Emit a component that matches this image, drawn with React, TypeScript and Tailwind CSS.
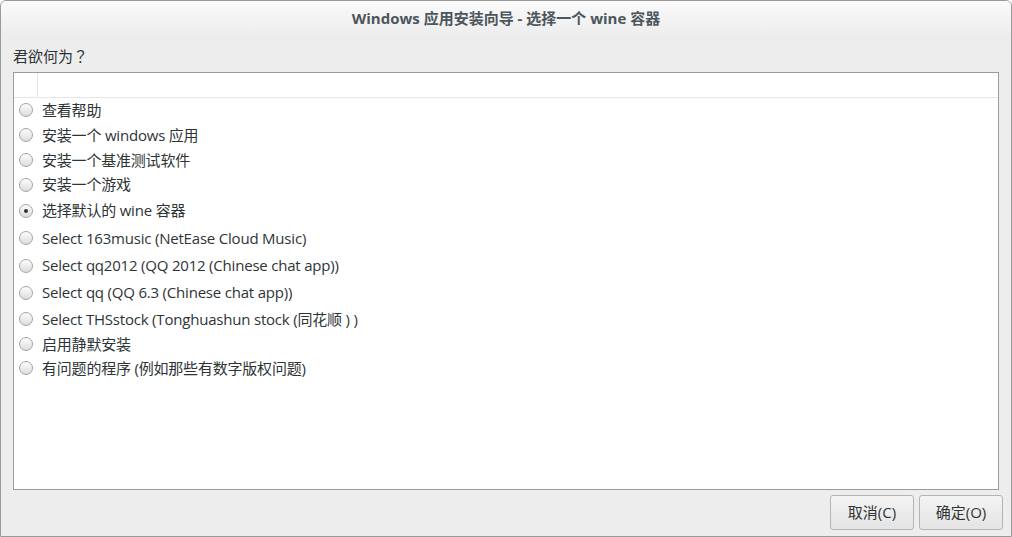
import React, { useState } from 'react';

const FONT = "'Open Sans', 'Noto Sans CJK SC', sans-serif";

const options: { label: string; h: string }[] = [
  { label: '查看帮助', h: 'h-[24px]' },
  { label: '安装一个 windows 应用', h: 'h-[26px]' },
  { label: '安装一个基准测试软件', h: 'h-[24px]' },
  { label: '安装一个游戏', h: 'h-[25px]' },
  { label: '选择默认的 wine 容器', h: 'h-[27px]' },
  { label: 'Select 163music (NetEase Cloud Music)', h: 'h-[28px]' },
  { label: 'Select qq2012 (QQ 2012 (Chinese chat app))', h: 'h-[27px]' },
  { label: 'Select qq (QQ 6.3 (Chinese chat app))', h: 'h-[27px]' },
  { label: 'Select THSstock (Tonghuashun stock (同花顺 ) )', h: 'h-[26px]' },
  { label: '启用静默安装', h: 'h-[24px]' },
  { label: '有问题的程序 (例如那些有数字版权问题)', h: 'h-[24px]' },
];

const Radio = ({ checked }: { checked: boolean }) => (
  <span className="w-[14px] h-[14px] rounded-full border border-[#a4a4a4] bg-gradient-to-b from-[#fdfdfd] to-[#dcdcdc] flex items-center justify-center shrink-0">
    {checked && <span className="w-[4px] h-[4px] rounded-full bg-[#2e3436]" />}
  </span>
);

export default function App() {
  const [selected, setSelected] = useState(4);

  return (
    <div
      className="w-[1012px] h-[537px] bg-[#ededed] border border-[#9a9a9a] rounded-t-[6px] flex flex-col overflow-hidden text-[#2e3436]"
      style={{ fontFamily: FONT }}
    >
      {/* Title bar */}
      <div className="h-[35px] shrink-0 bg-gradient-to-b from-[#fafafa] to-[#ededed] flex items-center justify-center">
        <span className="text-[15px] font-bold text-[#4c565c]">Windows 应用安装向导 - 选择一个 wine 容器</span>
      </div>

      <div className="flex-1 flex flex-col px-[12px]">
        <div className="text-[15px] h-[36px] flex items-center pt-[4px]">
          君欲何为<span style={{ fontFamily: "'Noto Sans CJK TC', sans-serif" }}>？</span>
        </div>

        {/* List */}
        <div className="h-[418px] bg-white border border-[#9b9b9b] flex flex-col">
          <div className="h-[25px] shrink-0 border-b border-[#e6e6e6] flex">
            <div className="w-[24px] border-r border-[#e6e6e6]" />
          </div>
          {options.map((o, i) => (
            <div
              key={o.label}
              onClick={() => setSelected(i)}
              className={`${o.h} shrink-0 flex items-center gap-[9px] pl-[5px] text-[15px] tracking-[-0.2px] cursor-default`}
            >
              <Radio checked={selected === i} />
              <span>{o.label}</span>
            </div>
          ))}
        </div>

        {/* Buttons */}
        <div className="flex justify-end gap-[5px] pt-[5px] mr-[-4px]">
          <button className="w-[84px] h-[35px] rounded-[3px] border border-[#b4b4b4] bg-gradient-to-b from-[#f4f4f4] to-[#e4e4e4] text-[15px] text-[#2e3436]">
            取消(C)
          </button>
          <button className="w-[84px] h-[35px] rounded-[3px] border border-[#b4b4b4] bg-gradient-to-b from-[#f4f4f4] to-[#e4e4e4] text-[15px] text-[#2e3436]">
            确定(O)
          </button>
        </div>
      </div>
    </div>
  );
}
